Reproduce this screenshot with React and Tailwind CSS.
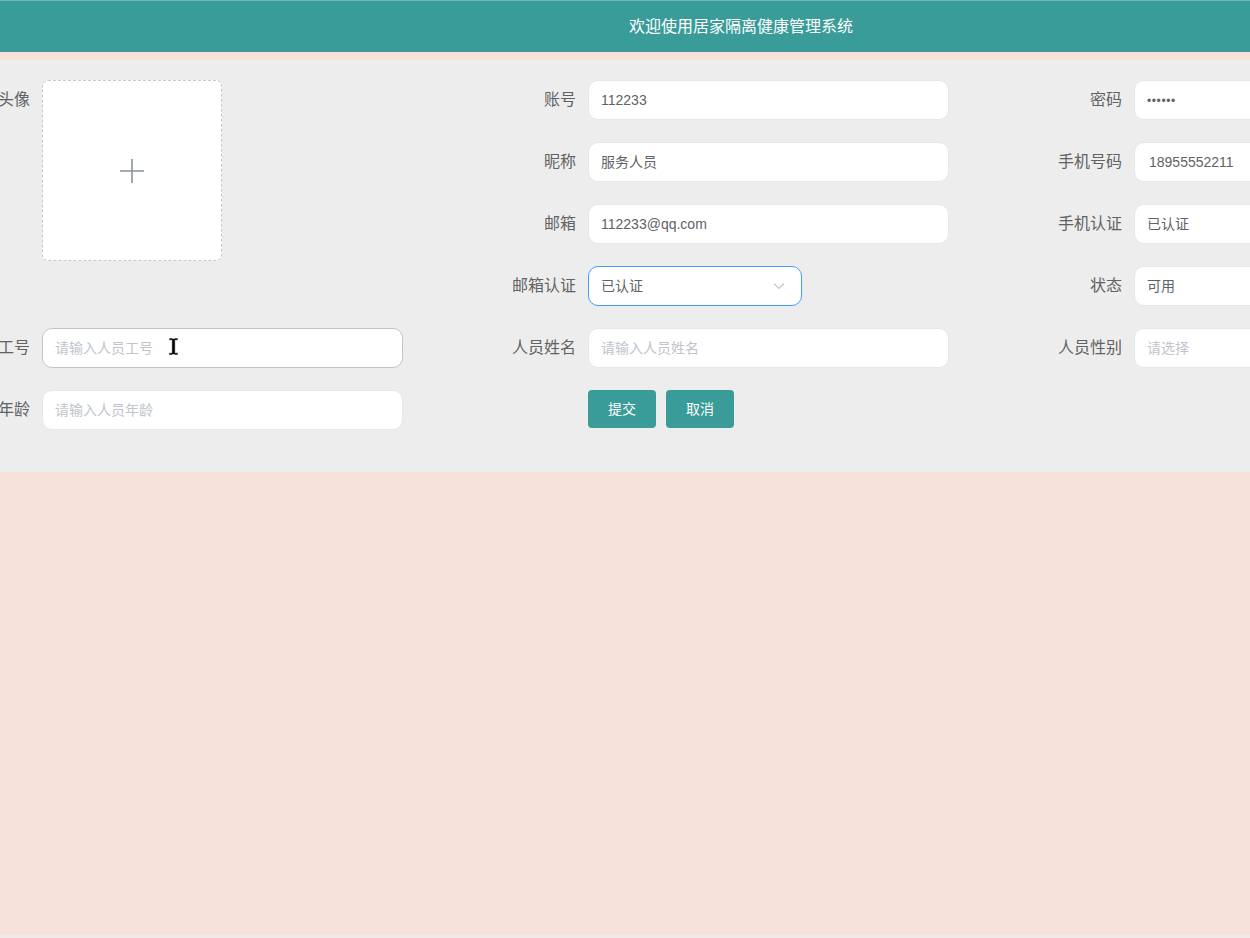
import React from 'react';

const FONT = { fontFamily: '"Liberation Sans", "Noto Sans CJK SC", "Noto Sans", sans-serif' };

function Label({ children, first }) {
  return (
    <div
      className={`flex items-center justify-end h-10 pr-3 text-[16px] text-[#606266] whitespace-nowrap ${first ? 'self-start' : ''}`}
    >
      {children}
    </div>
  );
}

function Field({ value, placeholder, hover, narrow }) {
  return (
    <div
      className={`flex items-center h-10 bg-white rounded-[10px] border px-3 text-[14px] whitespace-nowrap ${
        hover ? 'border-[#c0c4cc]' : 'border-[#e4e7ed]'
      } ${narrow ? 'w-[214px]' : 'w-[361px]'}`}
    >
      {value ? (
        <span className="text-[#606266]">{value}</span>
      ) : (
        <span className="text-[#c0c4cc]">{placeholder}</span>
      )}
    </div>
  );
}

function Upload() {
  return (
    <div className="row-span-4 self-start w-[180px] h-[181px] bg-white border border-dashed border-[#c8c8c8] rounded-[6px] flex items-center justify-center">
      <svg width="26" height="26" viewBox="0 0 26 26">
        <path d="M13 1v24M1 13h24" stroke="#8c939d" strokeWidth="1.6" fill="none" />
      </svg>
    </div>
  );
}

function Cursor() {
  return (
    <svg className="absolute left-[126px] top-[9px]" width="11" height="19" viewBox="0 0 11 19">
      <path d="M1 1h3.5v0.5h2V1H10v2.2H7.2v12.6H10V18H6.5v-0.5h-2V18H1v-2.2h2.8V3.2H1z" fill="#000" stroke="#fff" strokeWidth="0.6" />
    </svg>
  );
}

export default function App() {
  return (
    <div className="w-full h-[938px] flex flex-col overflow-hidden bg-[#f7e2da]" style={FONT}>
      {/* header */}
      <div className="h-[52px] bg-[#399c99] border-t border-[#6fb9b6] flex items-center justify-center pl-[232px] shrink-0">
        <span className="text-white text-[16px]">欢迎使用居家隔离健康管理系统</span>
      </div>
      <div className="h-2 bg-[#f7e2da] shrink-0" />

      {/* form panel */}
      <div className="bg-[#ededed] pt-[20px] pb-[42px] shrink-0">
        <div className="ml-[-92px] grid grid-cols-[134px_361px_185px_361px_185px_361px] auto-rows-[40px] gap-y-[22px] w-max">
          {/* row 1 */}
          <Label first>头像</Label>
          <Upload />
          <Label>账号</Label>
          <Field value="112233" />
          <Label>密码</Label>
          <Field value={<span className="tracking-[0.6px] text-[12px]">••••••</span>} />

          {/* row 2 */}
          <div className="col-start-3"><Label>昵称</Label></div>
          <Field value="服务人员" />
          <Label>手机号码</Label>
          <Field value={<span className="pl-[2px]">18955552211</span>} />

          {/* row 3 */}
          <div className="col-start-3"><Label>邮箱</Label></div>
          <Field value="112233@qq.com" />
          <Label>手机认证</Label>
          <Field value="已认证" />

          {/* row 4 */}
          <div className="col-start-3"><Label>邮箱认证</Label></div>
          <div className="flex items-center justify-between w-[214px] h-10 bg-white rounded-[10px] border border-[#409eff] pl-3 pr-[16px] text-[14px] text-[#606266]">
            <span>已认证</span>
            <svg width="12" height="8" viewBox="0 0 12 8">
              <path d="M1 1.5l5 5 5-5" stroke="#c0c4cc" strokeWidth="1.1" fill="none" />
            </svg>
          </div>
          <Label>状态</Label>
          <Field value="可用" />

          {/* row 5 */}
          <Label>工号</Label>
          <div className="relative">
            <Field placeholder="请输入人员工号" hover />
            <Cursor />
          </div>
          <Label>人员姓名</Label>
          <Field placeholder="请输入人员姓名" />
          <Label>人员性别</Label>
          <Field placeholder="请选择" />

          {/* row 6 */}
          <Label>年龄</Label>
          <Field placeholder="请输入人员年龄" />
          <div />
          <div className="flex items-start gap-[10px]">
            <button className="w-[68px] h-[38px] rounded-[4px] bg-[#399c99] text-white text-[14px]">提交</button>
            <button className="w-[68px] h-[38px] rounded-[4px] bg-[#399c99] text-white text-[14px]">取消</button>
          </div>
        </div>
      </div>

      <div className="flex-1" />
      <div className="h-[3px] bg-[#eeeaea] shrink-0" />
    </div>
  );
}
